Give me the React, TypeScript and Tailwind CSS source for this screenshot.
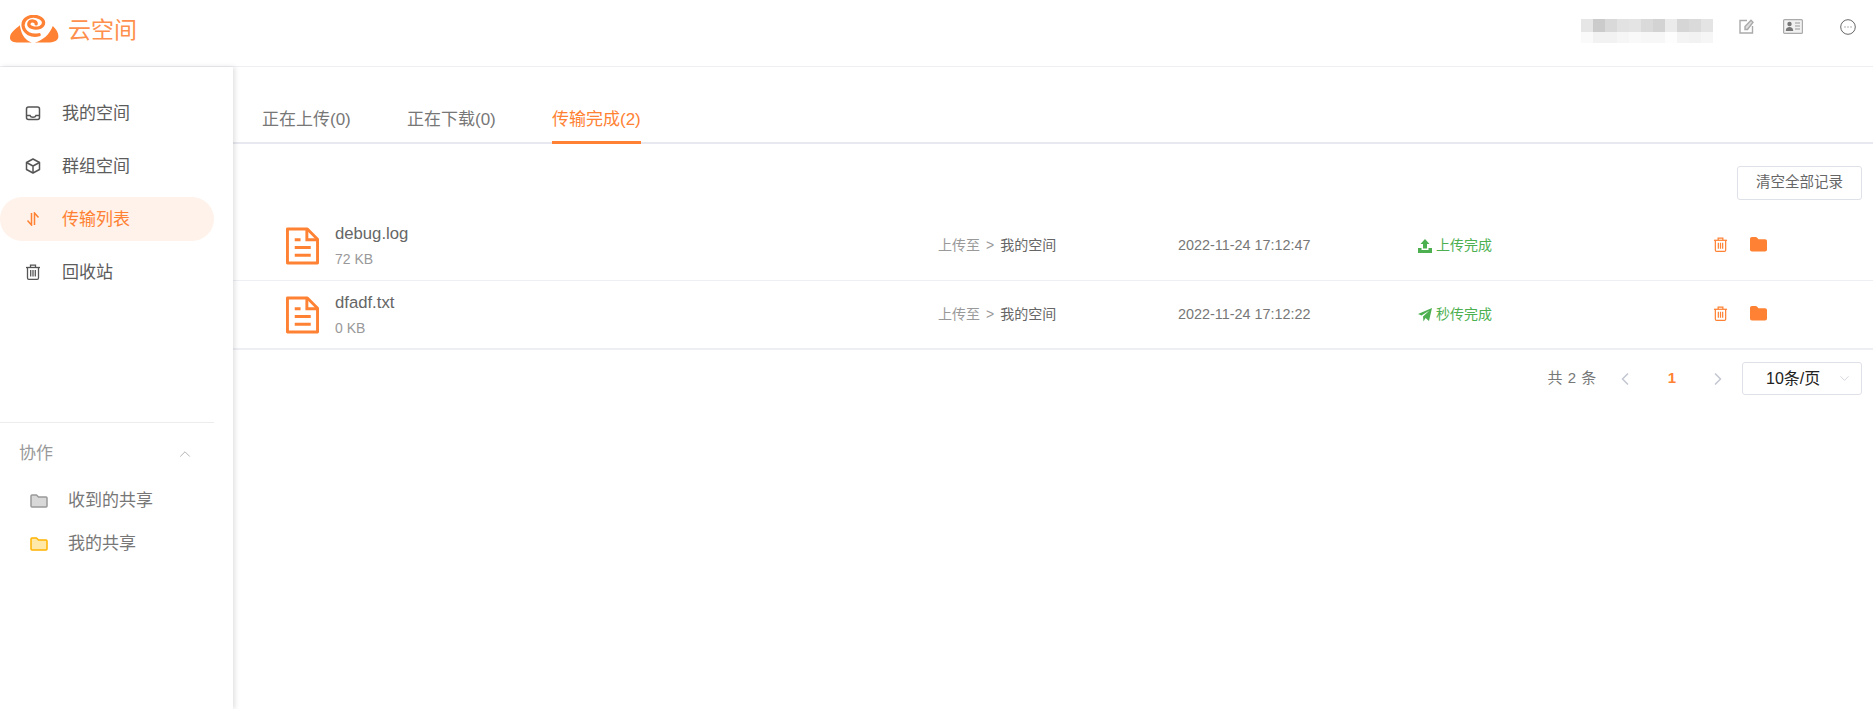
import { ChevronDown, ChevronLeft, ChevronRight, ChevronUp } from "lucide-react";

const ORANGE = "#ff8133";

const blurTop = ["#e6e6e6", "#cbcbcb", "#d9d9d9", "#e2e2e2", "#e4e4e4", "#dadada", "#d3d3d3", "#ebebeb", "#d6d6d6", "#dadada", "#e4e4e4"];
const blurBottom = ["#fafafa", "#f2f2f2", "#f2f2f2", "#f6f6f6", "#f9f9f9", "#f7f7f7", "#f7f7f7", "#fdfdfd", "#f4f4f4", "#f2f2f2", "#f6f6f6"];

function Logo() {
  return (
    <svg width="49" height="28" viewBox="15 15 150 85" fill={ORANGE}>
      <path d="M45 46C32 58 15 68 15 84C15 94 26 99 42 99H82C66 94 50 80 45 46Z" />
      <path d="M146 48C156 58 164 68 163 82C162 94 148 99 130 99H90C116 92 136 74 146 48Z" />
      <path
        d="M95 42C97 32 78 29 73 40C69 52 92 59 108 52C120 46 122 32 108 24C94 16 76 17 64 26C50 38 52 60 72 72C80 76 92 78 104 75"
        fill="none"
        stroke={ORANGE}
        strokeWidth="10"
        strokeLinecap="round"
      />
    </svg>
  );
}

function InboxIcon() {
  return (
    <svg width="16" height="16" viewBox="0 0 16 16" fill="none" stroke="#555" strokeWidth="1.500">
      <rect x="1.500" y="2" width="13" height="12.500" rx="2" />
      <path d="M1.500 10.500H5C5.500 12 6.500 12.300 8 12.300S10.500 12 11 10.500H14.500" />
    </svg>
  );
}

function CubeIcon() {
  return (
    <svg width="16" height="16" viewBox="0 0 16 16" fill="none" stroke="#555" strokeWidth="1.500" strokeLinejoin="round">
      <path d="M8 1L14.500 4.500V11.500L8 15L1.500 11.500V4.500Z" />
      <path d="M1.500 4.500L8 8L14.500 4.500M8 8V15" />
    </svg>
  );
}

function TransferIcon() {
  return (
    <svg width="14" height="14" viewBox="0 0 14 14" fill="none" stroke={ORANGE} strokeWidth="1.500">
      <path d="M5.500 1V13L1.500 8.500" />
      <path d="M8.500 13V1L12.500 5.500" />
    </svg>
  );
}

function TrashIcon({ color, size }: { color: string; size: number }) {
  return (
    <svg width={size} height={size} viewBox="0 0 16 16" fill="none" stroke={color} strokeWidth="1.300">
      <path d="M1 3.500H15" />
      <path d="M5.500 3.500V1.200H10.500V3.500" />
      <path d="M2.500 3.500V14C2.500 14.800 3 15.300 3.800 15.300H12.200C13 15.300 13.500 14.800 13.500 14V3.500" />
      <path d="M5.700 6V12.500M8 6V12.500M10.300 6V12.500" />
    </svg>
  );
}

function FolderIcon({ fill, stroke }: { fill: string; stroke: string }) {
  return (
    <svg width="18" height="14" viewBox="0 0 18 14" fill={fill} stroke={stroke} strokeWidth="1.500" strokeLinejoin="round">
      <path d="M1 2C1 1.400 1.400 1 2 1H6.500L8.500 3H16C16.600 3 17 3.400 17 4V12C17 12.600 16.600 13 16 13H2C1.400 13 1 12.600 1 12Z" />
    </svg>
  );
}

function SolidFolder() {
  return (
    <svg width="17" height="15" viewBox="0 0 17 15" fill={ORANGE}>
      <path d="M0 2C0 .8 .8 0 2 0H5.500C6.200 0 6.700 .3 7.200 .8L8.500 2.200H15C16.200 2.200 17 3 17 4.200V12.500C17 13.700 16.200 14.500 15 14.500H2C.8 14.500 0 13.700 0 12.500Z" />
    </svg>
  );
}

function FileIcon() {
  return (
    <svg width="33" height="38" viewBox="0 0 34 38" fill="none" stroke={ORANGE} strokeWidth="3">
      <path d="M1.500 1.500H22L32.500 12V36.500H1.500Z" strokeLinejoin="round" />
      <path d="M21.500 1.500V12.500H32.500" />
      <path d="M9 12.500H15M9 20.500H25.500M9 28.500H25.500" />
    </svg>
  );
}

function UploadDone() {
  return (
    <svg width="14" height="14" viewBox="0 0 14 14" fill="#4caf50">
      <path d="M7 0L11.500 5H9V9.500H5V5H2.500Z" />
      <path d="M0 9H3.500V11H10.500V9H14V14H0Z" />
    </svg>
  );
}

function FlashDone() {
  return (
    <svg width="14" height="14" viewBox="0 0 14 14" fill="#4caf50">
      <path d="M14 0L11 13L7.500 10L5.500 13.500L5 8.500L11.500 2.500L3.500 7.500L0 6Z" />
    </svg>
  );
}

function NoteIcon() {
  return (
    <svg width="15" height="15" viewBox="0 0 15 15" fill="none" stroke="#aaa" strokeWidth="1.400">
      <path d="M8 1.500H1V14H13.500V7" />
      <path d="M6 10.500V7.500L12 1.200L14 3.200L8.500 10.500Z" fill="#ddd" />
    </svg>
  );
}

function CardIcon() {
  return (
    <svg width="20" height="15" viewBox="0 0 20 15">
      <rect x=".6" y=".6" width="18.800" height="13.800" rx="1" fill="#f1f1f1" stroke="#aaa" strokeWidth="1.200" />
      <circle cx="6.500" cy="5" r="2.200" fill="#777" />
      <path d="M2.800 12C2.800 9 4.500 8 6.500 8S10.200 9 10.200 12Z" fill="#777" />
      <path d="M12 4H17M12 7H17M12 10H17" stroke="#999" strokeWidth="1.100" />
    </svg>
  );
}

function MoreIcon() {
  return (
    <svg width="16" height="16" viewBox="0 0 16 16" fill="none" stroke="#666">
      <circle cx="8" cy="8" r="7.300" />
      <path d="M4.500 8H5.500M7.500 8H8.500M10.500 8H11.500" strokeWidth="1.200" />
    </svg>
  );
}

function Header() {
  return (
    <header className="flex h-[67px] justify-between border-b border-[#eeeff3] bg-white">
      <div className="flex items-center pb-[8px] pl-[10px]">
        <Logo />
        <span className="ml-[9px] mt-[2px] text-[23px] leading-none text-[#ff8f4d]">云空间</span>
      </div>
      <div className="flex items-start pt-[19px]">
        <div className="flex w-[132px] flex-col">
          <div className="flex h-[13px]">
            {blurTop.map((c, i) => (
              <div key={i} className="h-full w-[12px]" style={{ backgroundColor: c }} />
            ))}
          </div>
          <div className="flex h-[11px]">
            {blurBottom.map((c, i) => (
              <div key={i} className="h-full w-[12px]" style={{ backgroundColor: c }} />
            ))}
          </div>
        </div>
        <div className="ml-[26px]"><NoteIcon /></div>
        <div className="ml-[29px]"><CardIcon /></div>
        <div className="ml-[37px] mr-[17px]"><MoreIcon /></div>
      </div>
    </header>
  );
}

function NavItem({ icon, label, active }: { icon: React.ReactNode; label: string; active?: boolean }) {
  return (
    <div
      className={`flex h-[44px] w-[214px] items-center rounded-[22px] pl-[25px] text-[17px] ${
        active ? "bg-[#fff2ea] text-[#ff8133]" : "text-[#5c5c5c]"
      }`}
    >
      <span className="flex w-[16px] justify-center">{icon}</span>
      <span className="ml-[21px] pt-[1px]">{label}</span>
    </div>
  );
}

function Sidebar() {
  return (
    <aside className="z-10 flex h-[642px] w-[233px] shrink-0 flex-col bg-white shadow-[2px_0_5px_rgba(0,0,0,0.12)]">
      <nav className="flex flex-col gap-[9px] pt-[24px]">
        <NavItem icon={<InboxIcon />} label="我的空间" />
        <NavItem icon={<CubeIcon />} label="群组空间" />
        <NavItem icon={<TransferIcon />} label="传输列表" active />
        <NavItem icon={<TrashIcon color="#555" size={16} />} label="回收站" />
      </nav>
      <div className="mt-[128px] w-[214px] border-t border-[#ececec]">
        <div className="flex h-[58px] items-center justify-between pl-[19px] pr-[20px] pt-[4px] text-[17px] text-[#999]">
          <span>协作</span>
          <ChevronUp size={18} strokeWidth={1.200} color="#aaa" />
        </div>
        <div className="flex h-[40px] items-center pl-[30px] text-[17px] text-[#777]">
          <FolderIcon fill="#d8d8d8" stroke="#999" />
          <span className="ml-[20px]">收到的共享</span>
        </div>
        <div className="mt-[3px] flex h-[40px] items-center pl-[30px] text-[17px] text-[#777]">
          <FolderIcon fill="#ffe8a8" stroke="#ffb300" />
          <span className="ml-[20px]">我的共享</span>
        </div>
      </div>
    </aside>
  );
}

const rows = [
  { name: "debug.log", size: "72 KB", time: "2022-11-24 17:12:47", status: "上传完成", icon: <UploadDone />, rowClass: "h-[70px] border-b" },
  { name: "dfadf.txt", size: "0 KB", time: "2022-11-24 17:12:22", status: "秒传完成", icon: <FlashDone />, rowClass: "h-[69px] border-b-2" },
];

function Row({ row }: { row: (typeof rows)[number] }) {
  return (
    <div className={`flex items-center border-[#eeeff3] ${row.rowClass}`}>
      <div className="flex w-[705px] items-center pl-[53px]">
        <FileIcon />
        <div className="ml-[16px] flex flex-col">
          <span className="text-[16.7px] leading-[24px] text-[#666]">{row.name}</span>
          <span className="mt-[3px] text-[14px] leading-[20px] text-[#999]">{row.size}</span>
        </div>
      </div>
      <div className="flex w-[240px] items-center text-[14px]">
        <span className="text-[#999]">上传至</span>
        <span className="mx-[6px] text-[#999]">&gt;</span>
        <span className="text-[#666]">我的空间</span>
      </div>
      <div className="w-[240px] text-[14.4px] text-[#777]">{row.time}</div>
      <div className="flex w-[295px] items-center text-[14px] text-[#4caf50]">
        {row.icon}
        <span className="ml-[4px]">{row.status}</span>
      </div>
      <div className="mb-[2px] flex items-center gap-[22px]">
        <TrashIcon color={ORANGE} size={15} />
        <SolidFolder />
      </div>
    </div>
  );
}

function Pagination() {
  return (
    <div className="flex h-[57px] items-center justify-end pr-[11px] text-[15px]">
      <span className="tracking-[0.5px] text-[#777]">共 2 条</span>
      <ChevronLeft size={20} strokeWidth={2} color="#c5c8d2" className="ml-[18px]" />
      <span className="ml-[33px] font-bold text-[#ff8133]">1</span>
      <ChevronRight size={20} strokeWidth={2} color="#c5c8d2" className="ml-[32px]" />
      <div className="ml-[14px] flex h-[33px] w-[120px] items-center justify-between rounded-[3px] border border-[#dfe1e8] pl-[23px] pr-[9px] text-[#222]">
        <span className="text-[16px]">10条/页</span>
        <ChevronDown size={15} strokeWidth={1.200} color="#c5c8d2" />
      </div>
    </div>
  );
}

function Main() {
  return (
    <main className="min-w-0 flex-1 bg-white">
      <div className="flex h-[77px] items-end border-b-2 border-[#e8e9f0] pl-[29px] text-[17px]">
        <div className="mb-[-2px] h-[48px] w-[145px] pt-[11px] text-[#777]">正在上传(0)</div>
        <div className="mb-[-2px] h-[48px] w-[145px] pt-[11px] text-[#777]">正在下载(0)</div>
        <div className="mb-[-2px] h-[48px] border-b-[3px] border-[#ff8133] pt-[11px] text-[#ff8133]">传输完成(2)</div>
      </div>
      <div className="flex justify-end pr-[11px] pt-[22px]">
        <button className="h-[34px] w-[125px] rounded-[3px] border border-[#dfe1e8] text-[14.5px] text-[#666]">清空全部记录</button>
      </div>
      <div className="mt-[11px]">
        {rows.map((r) => (
          <Row key={r.name} row={r} />
        ))}
      </div>
      <Pagination />
    </main>
  );
}

export default function App() {
  return (
    <div className="h-[709px] w-[1873px] overflow-hidden bg-white font-['Liberation_Sans','Noto_Sans_CJK_SC',sans-serif]">
      <Header />
      <div className="flex">
        <Sidebar />
        <Main />
      </div>
    </div>
  );
}
